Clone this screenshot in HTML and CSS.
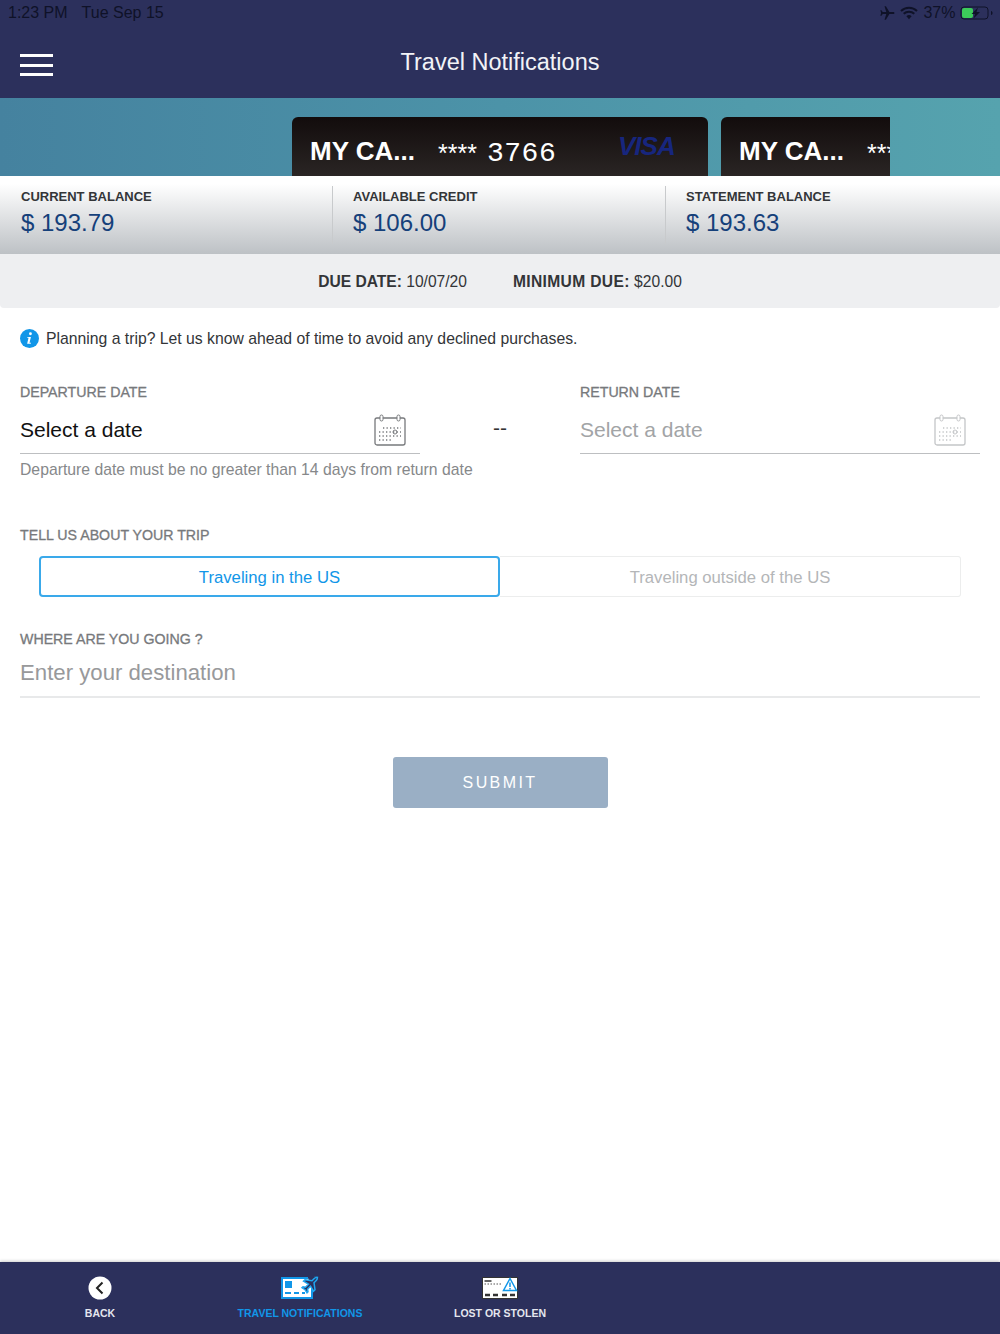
FILE: index.html
```html
<!DOCTYPE html>
<html lang="en">
<head>
  <meta charset="UTF-8" />
  <meta name="viewport" content="width=device-width, initial-scale=1.0"/>
  <title>Travel Notifications</title>
  <link rel="stylesheet" href="styles.css">
</head>
<body>
  <header class="top">
    <div class="status">
      <div class="status-left"><span>1:23 PM</span><span>Tue Sep 15</span></div>
      <div class="status-right">
        <svg class="ico-plane" viewBox="0 0 16 16"><path d="M15.5 8c0-.7-.6-1.100-1.300-1.100H10.400L6.900 1.200H5.500l1.800 5.700H3.700L2.500 5.300H1.300L2.100 8l-.8 2.700h1.200l1.200-1.600h3.600l-1.800 5.700h1.400l3.500-5.700h3.800c.7 0 1.300-.4 1.300-1.100z"/></svg>
        <svg class="ico-wifi" viewBox="0 0 18 14"><path d="M9 13.200 6.400 10.300a3.700 3.700 0 0 1 5.200 0z"/><path d="M1 5a11.400 11.400 0 0 1 16 0M3.700 7.800a7.600 7.600 0 0 1 10.600 0" fill="none" stroke="#0f1228" stroke-width="2"/></svg>
        <span>37%</span>
        <svg class="ico-batt" viewBox="0 0 34 16"><rect x="1" y="2" width="27" height="12" rx="3" fill="none" stroke="#0f1228" stroke-width="1"/><rect x="2" y="3" width="11" height="10" rx="2" fill="#3ccb5a"/><path d="M31 6v4c1 0 1.500-1 1.500-2s-.5-2-1.500-2z" fill="#0f1228"/><path d="M18 2.500 11.500 9h3.500l-1.500 4.500L20 7h-3.500z" fill="#0f1228"/></svg>
      </div>
    </div>
    <div class="nav">
      <div class="burger"><i></i><i></i><i></i></div>
      <h1>Travel Notifications</h1>
    </div>
  </header>

  <section class="banner">
    <div class="cards">
      <div class="card">
        <div class="card-name">MY CA...</div>
        <div class="card-stars">****</div>
        <div class="card-num">3766</div>
        <div class="card-visa">VISA</div>
      </div>
      <div class="card">
        <div class="card-name">MY CA...</div>
        <div class="card-stars">****</div>
      </div>
    </div>
  </section>

  <section class="balances">
    <div class="bal">
      <div class="bal-label">CURRENT BALANCE</div>
      <div class="bal-value">$ 193.79</div>
    </div>
    <div class="bal">
      <div class="bal-label">AVAILABLE CREDIT</div>
      <div class="bal-value">$ 106.00</div>
    </div>
    <div class="bal">
      <div class="bal-label">STATEMENT BALANCE</div>
      <div class="bal-value">$ 193.63</div>
    </div>
  </section>

  <section class="due">
    <div><b>DUE DATE:</b> 10/07/20</div>
    <div><b class="due-min">MINIMUM DUE:</b> $20.00</div>
  </section>

  <main class="form">
    <div class="info">
      <svg class="ico-info" viewBox="0 0 20 20"><circle cx="10" cy="10" r="10" fill="#1196e8"/><circle cx="11" cy="5" r="1.500" fill="#fff"/><path d="M7.800 8.300h3.700l-1.500 6.200h1.600l-.3 1H7.500l1.500-6.200H7.500z" fill="#fff"/></svg>
      <span>Planning a trip? Let us know ahead of time to avoid any declined purchases.</span>
    </div>

    <div class="dates">
      <div class="date-field">
        <div class="label">DEPARTURE DATE</div>
        <div class="date-input">
          <span>Select a date</span>
          <svg class="ico-cal" viewBox="0 0 32 32"><use href="#cal"/></svg>
        </div>
        <div class="hint">Departure date must be no greater than 14 days from return date</div>
      </div>
      <div class="dash">--</div>
      <div class="date-field is-off">
        <div class="label">RETURN DATE</div>
        <div class="date-input">
          <span>Select a date</span>
          <svg class="ico-cal" viewBox="0 0 32 32"><use href="#cal"/></svg>
        </div>
      </div>
    </div>

    <div class="label trip-label">TELL US ABOUT YOUR TRIP</div>
    <div class="toggle">
      <div class="toggle-item active">Traveling in the US</div>
      <div class="toggle-item">Traveling outside of the US</div>
    </div>

    <div class="label where-label">WHERE ARE YOU GOING ?</div>
    <div class="dest">Enter your destination</div>

    <div class="submit-row"><button class="submit">SUBMIT</button></div>
  </main>

  <footer class="tabs">
    <div class="tab">
      <svg class="tab-ico" viewBox="0 0 40 26"><circle cx="20" cy="13" r="11.500" fill="#fff"/><path d="M22.500 7.500 17 13l5.500 5.500" fill="none" stroke="#222" stroke-width="2"/></svg>
      <span>BACK</span>
    </div>
    <div class="tab active">
      <svg class="tab-ico" viewBox="0 0 40 26">
        <path d="M28 3H2v20h30v-9" fill="#fff" stroke="#1196e8" stroke-width="2"/>
        <rect x="5" y="6" width="7" height="7" fill="#1196e8"/>
        <path d="M5 18h6M14 18h5M22 18h3" stroke="#1196e8" stroke-width="2"/>
        <path d="M38 2.500c-1.500-.7-3 .2-4 1.200l-2 2-7-1-1.500 1.500 5 3-3 3-2.500-.5-1 1 3 2 2 3 1-1-.5-2.500 3-3 3 5 1.500-1.500-1-7 2-2c1-1 1.900-2.700 1-3.200z" fill="#2c305c" stroke="#1ea7f2" stroke-width="1.500"/>
      </svg>
      <span>TRAVEL NOTIFICATIONS</span>
    </div>
    <div class="tab">
      <svg class="tab-ico" viewBox="0 0 40 26">
        <rect x="2.500" y="2.500" width="35" height="21" fill="#fff" stroke="#333" stroke-width="1"/>
        <path d="M4.500 6h7" stroke="#333" stroke-width="1.500"/>
        <path d="M4.500 9h1.500M7.500 9h1.500M10.500 9h1.500M13.500 9h1.500M16.500 9h1.500M19.500 9h1.500" stroke="#555" stroke-width="1"/>
        <path d="M30 3.500 23.500 15.500h13z" fill="#fff" stroke="#1196e8" stroke-width="1.500"/>
        <path d="M30 7.500v4.500M30 13v1.500" stroke="#1196e8" stroke-width="1.500"/>
        <path d="M5 20h5M13 20h5M22 20h5M30 20h5" stroke="#333" stroke-width="2.500"/>
      </svg>
      <span>LOST OR STOLEN</span>
    </div>
  </footer>

  <svg class="defs" width="0" height="0">
    <symbol id="cal" viewBox="0 0 32 32">
      <rect x="1" y="4" width="30" height="27" rx="2" fill="none" stroke="currentColor" stroke-width="1.300"/>
      <rect x="6" y="1" width="3" height="6" rx="1.500" fill="#fff" stroke="currentColor"/>
      <rect x="23" y="1" width="3" height="6" rx="1.500" fill="#fff" stroke="currentColor"/>
      <g fill="none" stroke="currentColor" stroke-width="1.300" stroke-dasharray="1.300 2.200">
        <path d="M9 14h18M5 18h22M5 22h22M5 26h12"/>
      </g>
      <circle cx="21" cy="18" r="2" fill="none" stroke="currentColor"/>
    </symbol>
  </svg>
</body>
</html>
```

FILE: styles.css
```css
:root {
  --navy: #2c305c;
  --blue: #1196e8;
  --text-dark: #333538;
  --text-grey: #77797c;
  --text-light: #a2a4a6;
}

* {
  box-sizing: border-box;
}

body {
  margin: 0;
  min-height: 1334px;
  display: flex;
  flex-direction: column;
  font-family: "Liberation Sans", Arial, sans-serif;
  background: #ffffff;
  color: var(--text-dark);
}

.top {
  background: var(--navy);
  height: 98px;
}

.status {
  height: 26px;
  display: flex;
  justify-content: space-between;
  align-items: center;
  padding: 0 8px;
  font-size: 16px;
  color: #0f1228;
}

.status-left {
  display: flex;
  gap: 14px;
}

.status-right {
  display: flex;
  align-items: center;
  gap: 5px;
}

.status-right svg {
  fill: #0f1228;
  display: block;
}

.ico-plane {
  width: 16px;
  height: 16px;
}

.ico-wifi {
  width: 18px;
  height: 14px;
}

.ico-batt {
  width: 34px;
  height: 16px;
  margin-left: -1px;
  margin-right: -1.5px;
}

.nav {
  display: flex;
  justify-content: center;
  align-items: center;
  height: 72px;
  position: relative;
}

.nav h1 {
  margin: 0;
  font-size: 23.5px;
  font-weight: 400;
  color: #f2f3f7;
  line-height: 26px;
}

.burger {
  position: absolute;
  left: 20px;
  top: 28px;
  display: flex;
  flex-direction: column;
  gap: 6.5px;
}

.burger i {
  display: block;
  width: 33px;
  height: 3px;
  background: #ffffff;
}

.banner {
  height: 78px;
  background: linear-gradient(90deg, #45829f 0%, #4c93a8 50%, #56a3ae 100%);
  padding: 19px 0 0 292px;
}

.cards {
  width: 598px;
  height: 59px;
  overflow: hidden;
  display: flex;
  gap: 13px;
}

.card {
  flex: 0 0 416px;
  height: 59px;
  border-radius: 6px 6px 0 0;
  background: linear-gradient(180deg, #120c0c 0%, #2a2524 100%);
  color: #ffffff;
  display: flex;
  align-items: center;
  padding: 10px 18px 0;
  position: relative;
}

.card-name {
  font-size: 26px;
  font-weight: 700;
  width: 128px;
  white-space: nowrap;
}

.card-stars {
  font-size: 25px;
  width: 49px;
  padding-top: 4px;
}

.card-num {
  font-family: "Liberation Mono", monospace;
  font-size: 28px;
  letter-spacing: 0.5px;
  padding-top: 4px;
}

.card-visa {
  position: absolute;
  left: 326px;
  top: 14px;
  font-size: 26px;
  font-weight: 700;
  font-style: italic;
  color: #17267e;
  letter-spacing: -1px;
}

.balances {
  height: 78px;
  display: flex;
  background: linear-gradient(180deg, #ffffff 10%, #bdc1c5 100%);
}

.bal {
  flex: 0 0 333px;
  padding: 3px 0 0 21px;
  margin: 10px 0;
  border-right: 1px solid #c8cacc;
}

.bal:nth-child(2) {
  padding-left: 20px;
}

.bal:nth-child(3) {
  padding-left: 20px;
  border-right: none;
}

.bal-label {
  font-size: 13px;
  font-weight: 700;
  color: var(--text-dark);
  line-height: 16px;
}

.bal-value {
  font-size: 24px;
  color: #15407a;
  line-height: 28px;
  margin-top: 4px;
}

.due {
  height: 54px;
  padding-top: 2px;
  background: #eeeff1;
  display: flex;
  justify-content: center;
  align-items: center;
  gap: 46px;
  font-size: 15.6px;
  border-radius: 0 0 4px 4px;
}

.due-min {
  letter-spacing: 0.35px;
}

.form {
  flex: 1;
  padding: 0 20px;
}

.info {
  height: 60px;
  padding-top: 2px;
  display: flex;
  align-items: center;
  gap: 7px;
  font-size: 15.75px;
}

.ico-info {
  width: 19px;
  height: 19px;
  margin-bottom: 1px;
}

.label {
  font-size: 14.2px;
  line-height: 16px;
  font-weight: 400;
  color: var(--text-grey);
  -webkit-text-stroke: 0.3px var(--text-grey);
}

.dates {
  display: flex;
  justify-content: space-between;
  padding-top: 16px;
}

.date-field {
  width: 400px;
}

.date-input {
  height: 48px;
  margin-top: 6px;
  display: flex;
  justify-content: space-between;
  align-items: center;
  padding-top: 1px;
  font-size: 21px;
  color: #111111;
  border-bottom: 1px solid #bdbfc1;
}

.ico-cal {
  width: 32px;
  height: 32px;
  margin-right: 14px;
  color: #77797c;
}

.is-off .date-input {
  color: var(--text-light);
}

.is-off .ico-cal {
  color: #c4c6c8;
}

.dash {
  font-size: 21px;
  color: #333333;
  padding-top: 32px;
}

.hint {
  font-size: 15.75px;
  line-height: 18px;
  color: #86888a;
  margin-top: 7px;
  white-space: nowrap;
}

.trip-label {
  margin-top: 48px;
}

.toggle {
  display: flex;
  margin: 13px 19px 0;
  height: 41px;
}

.toggle-item {
  flex: 0 0 461px;
  display: flex;
  align-items: center;
  justify-content: center;
  padding-top: 2px;
  font-size: 16.7px;
  color: #b4b6b8;
  border: 1px solid #eceded;
  border-left: none;
  border-radius: 0 3px 3px 0;
}

.toggle-item.active {
  color: var(--blue);
  border: 2px solid #3aa9ea;
  border-radius: 4px;
}

.where-label {
  margin-top: 34px;
}

.dest {
  height: 51px;
  padding-top: 12px;
  font-size: 22.2px;
  line-height: 28px;
  color: #98999b;
  border-bottom: 2px solid #e8e9ea;
}

.submit-row {
  display: flex;
  justify-content: center;
  margin-top: 59px;
}

.submit {
  width: 215px;
  height: 51px;
  border: none;
  border-radius: 3px;
  background: #9aafc5;
  color: #ffffff;
  font-family: inherit;
  font-size: 16px;
  letter-spacing: 2.4px;
}

.tabs {
  height: 72px;
  background: var(--navy);
  display: flex;
  box-shadow: 0 -1px 3px rgba(0,0,0,0.2);
}

.tab {
  flex: 0 0 200px;
  display: flex;
  flex-direction: column;
  align-items: center;
  padding-top: 13px;
  font-size: 10.5px;
  font-weight: 700;
  color: #e4e6ee;
}

.tab.active {
  color: var(--blue);
}

.tab-ico {
  width: 40px;
  height: 26px;
  margin-bottom: 6px;
}

.tab span {
  line-height: 12px;
}

.defs {
  position: absolute;
}
```
